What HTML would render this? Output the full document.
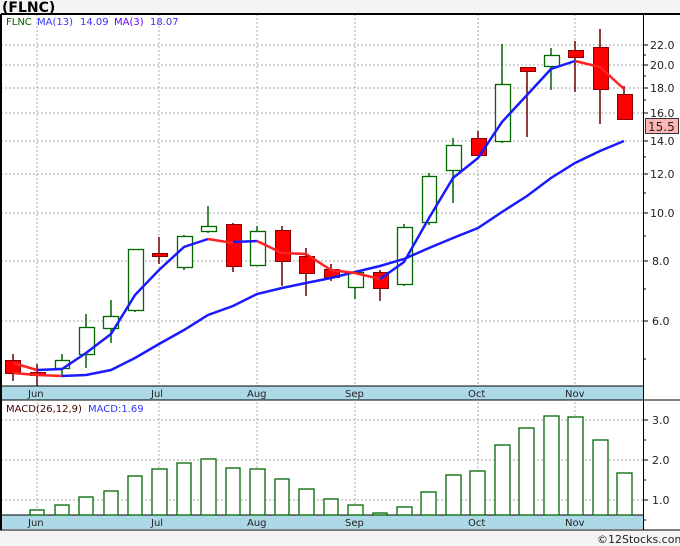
<!DOCTYPE html>
<html><head><meta charset="utf-8"><style>
body{margin:0;width:680px;height:546px;background:#f4f4f4;overflow:hidden;font-family:"DejaVu Sans","Liberation Sans",sans-serif}
svg{display:block}
</style></head><body>
<svg width="680" height="546" xmlns="http://www.w3.org/2000/svg" font-family="DejaVu Sans, Liberation Sans, sans-serif">
<rect x="0" y="0" width="680" height="546" fill="#f4f4f4"/>
<rect x="1" y="14" width="679" height="516" fill="#fff"/>
<text x="2" y="12" font-size="14" font-weight="bold" fill="#000">(FLNC)</text>
<g stroke="#aaa" stroke-width="1" stroke-dasharray="2,2">
<line x1="1" y1="45" x2="643" y2="45"/><line x1="1" y1="65" x2="643" y2="65"/><line x1="1" y1="88" x2="643" y2="88"/><line x1="1" y1="113" x2="643" y2="113"/><line x1="1" y1="141" x2="643" y2="141"/><line x1="1" y1="174" x2="643" y2="174"/><line x1="1" y1="213" x2="643" y2="213"/><line x1="1" y1="261" x2="643" y2="261"/><line x1="1" y1="321" x2="643" y2="321"/>
<line x1="1" y1="420" x2="643" y2="420"/><line x1="1" y1="460" x2="643" y2="460"/><line x1="1" y1="500" x2="643" y2="500"/>
<line x1="37" y1="14" x2="37" y2="515"/><line x1="159" y1="14" x2="159" y2="515"/><line x1="257" y1="14" x2="257" y2="515"/><line x1="355" y1="14" x2="355" y2="515"/><line x1="478" y1="14" x2="478" y2="515"/><line x1="575" y1="14" x2="575" y2="515"/>
</g>
<text x="6" y="25" font-size="10" fill="#006600">FLNC</text>
<text x="37" y="25" font-size="10" fill="#3333ff">MA(13)</text>
<text x="80" y="25" font-size="10" fill="#3333ff">14.09</text>
<text x="114" y="25" font-size="10" fill="#6600ff">MA(3)</text>
<text x="150" y="25" font-size="10" fill="#3333ff">18.07</text>
<!-- wicks -->
<g stroke-width="1.5">
<g stroke="#660000">
<line x1="13" y1="354" x2="13" y2="381"/><line x1="37" y1="364" x2="37" y2="386"/><line x1="159" y1="237" x2="159" y2="264"/><line x1="233" y1="223" x2="233" y2="272"/><line x1="282" y1="226" x2="282" y2="286"/><line x1="306" y1="248" x2="306" y2="296"/><line x1="331" y1="264" x2="331" y2="281"/><line x1="380" y1="270" x2="380" y2="301"/><line x1="478" y1="131" x2="478" y2="156"/><line x1="527" y1="67" x2="527" y2="137"/><line x1="575" y1="41" x2="575" y2="92"/><line x1="600" y1="29" x2="600" y2="124"/><line x1="624" y1="86" x2="624" y2="120"/>
</g>
<g stroke="#006600">
<line x1="62" y1="354" x2="62" y2="375"/><line x1="86" y1="314" x2="86" y2="368"/><line x1="111" y1="300" x2="111" y2="343"/><line x1="135" y1="249" x2="135" y2="312"/><line x1="184" y1="235" x2="184" y2="270"/><line x1="208" y1="206" x2="208" y2="233"/><line x1="257" y1="226" x2="257" y2="265"/><line x1="355" y1="272" x2="355" y2="299"/><line x1="404" y1="224" x2="404" y2="286"/><line x1="429" y1="173" x2="429" y2="225"/><line x1="453" y1="138" x2="453" y2="203"/><line x1="502" y1="44" x2="502" y2="143"/><line x1="551" y1="48" x2="551" y2="90"/>
</g>
</g>
<g stroke="#880000" stroke-width="1" fill="#ff0000">
<rect x="5.5" y="360.5" width="15" height="13"/><rect x="30.5" y="372.5" width="15" height="3"/><rect x="152.5" y="253.5" width="15" height="3"/><rect x="226.5" y="224.5" width="15" height="42"/><rect x="275.5" y="230.5" width="15" height="31"/><rect x="299.5" y="256.5" width="15" height="17"/><rect x="324.5" y="269.5" width="15" height="8"/><rect x="373.5" y="272.5" width="15" height="16"/><rect x="471.5" y="138.5" width="15" height="17"/><rect x="520.5" y="67.5" width="15" height="4"/><rect x="568.5" y="50.5" width="15" height="7"/><rect x="593.5" y="47.5" width="15" height="42"/><rect x="617.5" y="94.5" width="15" height="25"/>
</g>
<g stroke="#006600" stroke-width="1.3" fill="#fff">
<rect x="55.5" y="360.5" width="14" height="8"/><rect x="79.5" y="327.5" width="15" height="27"/><rect x="103.5" y="316.5" width="15" height="12"/><rect x="128.5" y="249.5" width="15" height="61"/><rect x="177.5" y="236.5" width="15" height="31"/><rect x="201.5" y="226.5" width="15" height="5"/><rect x="250.5" y="231.5" width="15" height="34"/><rect x="348.5" y="272.5" width="15" height="15"/><rect x="397.5" y="227.5" width="15" height="57"/><rect x="422.5" y="176.5" width="14" height="46"/><rect x="446.5" y="145.5" width="15" height="25"/><rect x="495.5" y="84.5" width="15" height="57"/><rect x="544.5" y="55.5" width="15" height="11"/>
</g>
<!-- MA13 -->
<polyline fill="none" stroke="#ff2020" stroke-width="2.5" points="13,373 37,375 62,376"/>
<polyline fill="none" stroke="#1a1aff" stroke-width="2.5" points="62,376 86,375 111,370 135,358 159,344 184,330 208,315 233,306 257,294 282,288 306,283 331,278 355,272 380,266 404,259 429,248 453,238 478,228 502,212 527,196 551,178 575,163 600,151 624,141"/>
<!-- MA3 -->
<polyline fill="none" stroke="#ff2020" stroke-width="2.5" points="13,363 37,370"/>
<polyline fill="none" stroke="#1a1aff" stroke-width="2.5" points="37,370 62,369 86,353 111,334 135,295 159,270 184,247 208,239"/>
<polyline fill="none" stroke="#ff2020" stroke-width="2.5" points="208,239 233,243"/>
<polyline fill="none" stroke="#1a1aff" stroke-width="2.5" points="233,242 257,241"/>
<polyline fill="none" stroke="#ff2020" stroke-width="2.5" points="257,241 282,253 306,254 331,270 355,273 380,279"/>
<polyline fill="none" stroke="#1a1aff" stroke-width="2.5" points="380,279 404,262 429,218 453,178 478,158 502,122 527,95 551,69 575,61"/>
<polyline fill="none" stroke="#ff2020" stroke-width="2.5" points="575,61 600,67 624,89"/>
<!-- bands -->
<rect x="1" y="386" width="642" height="14" fill="#add8e6"/>
<rect x="1" y="515" width="642" height="14" fill="#add8e6"/>
<line x1="1" y1="386" x2="643" y2="386" stroke="#000"/>
<line x1="1" y1="400" x2="680" y2="400" stroke="#000"/>
<line x1="1" y1="515" x2="643" y2="515" stroke="#000"/>
<line x1="0" y1="530" x2="680" y2="530" stroke="#000"/>
<line x1="1" y1="14" x2="680" y2="14" stroke="#000" stroke-width="2"/>
<line x1="1" y1="14" x2="1" y2="530" stroke="#000" stroke-width="2"/>
<line x1="643.5" y1="14" x2="643.5" y2="530" stroke="#000"/>
<g font-size="10" fill="#222">
<text x="28" y="397">Jun</text><text x="151" y="397">Jul</text><text x="247" y="397">Aug</text><text x="345" y="397">Sep</text><text x="468" y="397">Oct</text><text x="565" y="397">Nov</text>
<text x="28" y="526">Jun</text><text x="151" y="526">Jul</text><text x="247" y="526">Aug</text><text x="345" y="526">Sep</text><text x="468" y="526">Oct</text><text x="565" y="526">Nov</text>
</g>
<text x="6" y="412" font-size="10" fill="#440000">MACD(26,12,9)</text>
<text x="88" y="412" font-size="10" fill="#3333ff">MACD:1.69</text>
<!-- MACD bars -->
<g stroke="#006600" stroke-width="1.3" fill="#fff">
<rect x="30" y="510" width="14" height="5"/><rect x="55" y="505" width="14" height="10"/><rect x="79" y="497" width="14" height="18"/><rect x="104" y="491" width="14" height="24"/><rect x="128" y="476" width="14" height="39"/><rect x="152" y="469" width="15" height="46"/><rect x="177" y="463" width="14" height="52"/><rect x="201" y="459" width="15" height="56"/><rect x="226" y="468" width="14" height="47"/><rect x="250" y="469" width="15" height="46"/><rect x="275" y="479" width="14" height="36"/><rect x="299" y="489" width="15" height="26"/><rect x="324" y="499" width="14" height="16"/><rect x="348" y="505" width="15" height="10"/><rect x="373" y="513" width="14" height="2"/><rect x="397" y="507" width="15" height="8"/><rect x="421" y="492" width="15" height="23"/><rect x="446" y="475" width="15" height="40"/><rect x="470" y="471" width="15" height="44"/><rect x="495" y="445" width="15" height="70"/><rect x="519" y="428" width="15" height="87"/><rect x="544" y="416" width="15" height="99"/><rect x="568" y="417" width="15" height="98"/><rect x="593" y="440" width="15" height="75"/><rect x="617" y="473" width="15" height="42"/>
</g>
<!-- right axis -->
<g stroke="#000">
<line x1="643" y1="45" x2="648" y2="45"/><line x1="643" y1="55" x2="646" y2="55"/><line x1="643" y1="65" x2="648" y2="65"/><line x1="643" y1="76" x2="646" y2="76"/><line x1="643" y1="88" x2="648" y2="88"/><line x1="643" y1="100" x2="646" y2="100"/><line x1="643" y1="113" x2="648" y2="113"/><line x1="643" y1="141" x2="648" y2="141"/><line x1="643" y1="157" x2="646" y2="157"/><line x1="643" y1="174" x2="648" y2="174"/><line x1="643" y1="193" x2="646" y2="193"/><line x1="643" y1="213" x2="648" y2="213"/><line x1="643" y1="236" x2="646" y2="236"/><line x1="643" y1="261" x2="648" y2="261"/><line x1="643" y1="289" x2="646" y2="289"/><line x1="643" y1="321" x2="648" y2="321"/><line x1="643" y1="359" x2="646" y2="359"/>
<line x1="643" y1="420" x2="648" y2="420"/><line x1="643" y1="440" x2="646" y2="440"/><line x1="643" y1="460" x2="648" y2="460"/><line x1="643" y1="480" x2="646" y2="480"/><line x1="643" y1="500" x2="648" y2="500"/><line x1="643" y1="520" x2="646" y2="520"/>
</g>
<g font-size="11" fill="#222">
<text x="650" y="49">22.0</text><text x="650" y="69">20.0</text><text x="650" y="92">18.0</text><text x="650" y="117">16.0</text><text x="650" y="145">14.0</text><text x="650" y="178">12.0</text><text x="650" y="217">10.0</text><text x="652" y="265">8.0</text><text x="652" y="325">6.0</text>
<text x="652" y="424">3.0</text><text x="652" y="464">2.0</text><text x="652" y="504">1.0</text>
</g>
<rect x="645.5" y="118.5" width="33" height="15" fill="#ffb6b6" stroke="#333"/>
<text x="648" y="131" font-size="12" fill="#222">15.5</text>
<text x="597" y="543" font-size="11" fill="#222">©12Stocks.com</text>
</svg>
</body></html>
